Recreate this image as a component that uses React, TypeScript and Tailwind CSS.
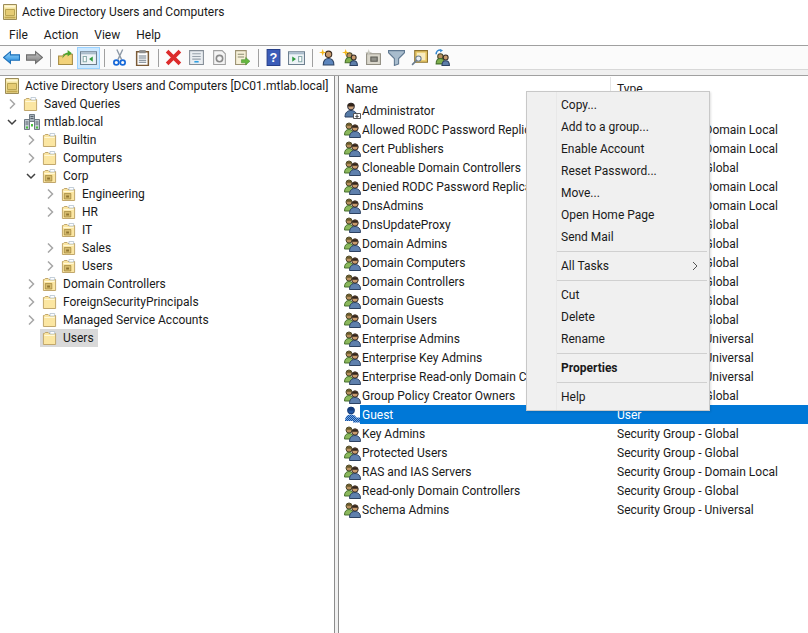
const font = "font-['Roboto','Open_Sans',sans-serif]"

const users: [string, string][] = [
  ['Administrator', 'User'],
  ['Allowed RODC Password Replication Group', 'Security Group - Domain Local'],
  ['Cert Publishers', 'Security Group - Domain Local'],
  ['Cloneable Domain Controllers', 'Security Group - Global'],
  ['Denied RODC Password Replication Group', 'Security Group - Domain Local'],
  ['DnsAdmins', 'Security Group - Domain Local'],
  ['DnsUpdateProxy', 'Security Group - Global'],
  ['Domain Admins', 'Security Group - Global'],
  ['Domain Computers', 'Security Group - Global'],
  ['Domain Controllers', 'Security Group - Global'],
  ['Domain Guests', 'Security Group - Global'],
  ['Domain Users', 'Security Group - Global'],
  ['Enterprise Admins', 'Security Group - Universal'],
  ['Enterprise Key Admins', 'Security Group - Universal'],
  ['Enterprise Read-only Domain Controllers', 'Security Group - Universal'],
  ['Group Policy Creator Owners', 'Security Group - Global'],
  ['Guest', 'User'],
  ['Key Admins', 'Security Group - Global'],
  ['Protected Users', 'Security Group - Global'],
  ['RAS and IAS Servers', 'Security Group - Domain Local'],
  ['Read-only Domain Controllers', 'Security Group - Global'],
  ['Schema Admins', 'Security Group - Universal'],
]

function FolderIcon({ ou }: { ou?: boolean }) {
  return (
    <svg width="15" height="16" viewBox="0 0 16 16" className="shrink-0" preserveAspectRatio="none">
      <path d="M1.500 3.500h1l1-1h3l1 1h7v11h-13z" fill="#fbe6a2" stroke="#bfa468" />
      <path d="M2.500 5.500h11" stroke="#fff8dc" />
      <path d="M8.500 1.500h5v2.500h-5z" fill="#ffffff" stroke="#a8b8c6" strokeWidth="0.7" />
      {ou && <path d="M3.500 7.500h7v5.500h-7z" fill="#d6bb6c" stroke="#9a7f38" strokeWidth="0.7" />}
      {ou && <path d="M5.500 9.500h3v2h-3z" fill="#8f7430" />}
    </svg>
  )
}

function DomainIcon() {
  return (
    <svg width="16" height="16" viewBox="0 0 16 16" className="shrink-0">
      <path d="M5.500 .500h5v7h-5z" fill="#a9b4bd" stroke="#6f7a84" />
      <path d="M.500 5.500h5v10h-5zM10.500 5.500h5v10h-5z" fill="#c3ccd3" stroke="#6f7a84" />
      <path d="M6.500 2.500h3M6.500 4.500h3M1.500 8h3M11.500 8h3M1.500 10h3M11.500 10h3" stroke="#59636c" />
      <path d="M2 12.500h2v2H2zM12 12.500h2v2h-2zM7 10h2v2.500H7z" fill="#49c13d" />
    </svg>
  )
}

function UserIcon({ guest }: { guest?: boolean }) {
  if (guest) {
    return (
      <svg width="17" height="17" viewBox="0 0 17 17" className="shrink-0">
        <defs>
          <pattern id="dither" width="2" height="2" patternUnits="userSpaceOnUse">
            <rect width="2" height="2" fill="#174f9e" />
            <rect width="1" height="1" fill="#6fa6e6" />
            <rect x="1" y="1" width="1" height="1" fill="#6fa6e6" />
          </pattern>
        </defs>
        <circle cx="7" cy="4.500" r="3.400" fill="#1f57a8" stroke="#16386e" />
        <path d="M3.500 3c1-2.500 6-2.500 7 0l-.5 1.500h-6z" fill="#143a78" />
        <path d="M1 15c0-4.500 2.500-6.500 6-6.500s6 2 6 6.500z" fill="url(#dither)" />
        <path d="M9 11.500h7.500v5H9z" fill="url(#dither)" />
      </svg>
    )
  }
  return (
    <svg width="17" height="17" viewBox="0 0 17 17" className="shrink-0">
      <circle cx="7" cy="4.500" r="3.400" fill="#caa07a" stroke="#2a3140" />
      <path d="M3.500 3c1-2.500 6-2.500 7 0l-.5 1.500h-6z" fill="#32241a" />
      <path d="M1 15c0-4.500 2.500-6.500 6-6.500s6 2 6 6.500z" fill="#557aa6" stroke="#2a3f60" />
      <path d="M9.500 11.500h7v5h-7z" fill="#fff" stroke="#555" />
      <path d="M13 12.500v2.500M11.500 14l1.500 1.500 1.500-1.500" stroke="#222" fill="none" />
    </svg>
  )
}

function GroupIcon() {
  return (
    <svg width="17" height="16" viewBox="0 0 17 16" className="shrink-0">
      <circle cx="5" cy="4" r="3" fill="#b78f5e" stroke="#4b4a2c" />
      <path d="M2.500 2.800c1-1.700 4-1.700 5 0l-.5 1h-4z" fill="#6a5a2a" />
      <path d="M.500 13c0-3.500 1.500-5.500 4.500-5.500s4.500 2 4.500 5.500z" fill="#8bb85c" stroke="#47702c" />
      <circle cx="11" cy="6" r="3.200" fill="#c89a6c" stroke="#352b24" />
      <path d="M8 4.800c1-2.200 5-2.200 6 0l-.5 1h-5z" fill="#33261d" />
      <path d="M5.500 15.500c0-4 2-6 5.500-6s5.500 2 5.500 6z" fill="#5f80ad" stroke="#2d4262" />
    </svg>
  )
}

function RootIcon() {
  return (
    <svg width="14" height="16" viewBox="0 0 14 16" className="shrink-0">
      <path d="M.500 .500h13v15h-13z" fill="#f3e3a0" stroke="#9c8c58" />
      <path d="M1.500 1.500h11v2h-11z" fill="#fff8d6" />
      <path d="M2.500 5.500h9v6h-9z" fill="#e6cc74" stroke="#b9a452" />
      <path d="M1.500 13.500h11" stroke="#c2a850" strokeWidth="2" />
    </svg>
  )
}

function Chevron({ open }: { open?: boolean }) {
  return open ? (
    <svg width="10" height="10" viewBox="0 0 10 10" className="shrink-0">
      <path d="M1 3l4 4 4-4" fill="none" stroke="#404040" strokeWidth="1.500" />
    </svg>
  ) : (
    <svg width="10" height="10" viewBox="0 0 10 10" className="shrink-0">
      <path d="M3 .500l4.500 4.500-4.500 4.500" fill="none" stroke="#a6a6a6" strokeWidth="1.500" />
    </svg>
  )
}

function TreeRow({
  depth,
  arrow,
  ou,
  selected,
  children,
}: {
  depth: string
  arrow?: 'open' | 'closed'
  ou?: boolean
  selected?: boolean
  children: string
}) {
  return (
    <div className={`flex h-[18px] items-center ${depth}`}>
      <span className="flex w-[14px] shrink-0 justify-start">
        {arrow && <Chevron open={arrow === 'open'} />}
      </span>
      <span className={`flex h-[18px] items-center ${selected ? 'bg-[#d9d9d9]' : ''}`}>
        <span className="ml-[2px]"><FolderIcon ou={ou} /></span>
        <span className="ml-[6px] pr-[4px] leading-[18px]">{children}</span>
      </span>
    </div>
  )
}

function ToolSep() {
  return <span className="ml-[4px] mr-[3px] h-[18px] w-px shrink-0 bg-[#a0a0a0]" />
}

function ToolBtn({ active, children }: { active?: boolean; children: React.ReactNode }) {
  return (
    <span className={`flex h-[22px] w-[23px] shrink-0 items-center justify-center ${active ? 'border border-[#99d1ff] bg-[#cce8ff]' : ''}`}>
      {children}
    </span>
  )
}

function Tb({ children }: { children: React.ReactNode }) {
  return <svg width="17" height="17" viewBox="0 0 16 16">{children}</svg>
}

function Toolbar() {
  return (
    <div className="flex h-[23px] items-center">
      <ToolBtn>
        <Tb>
          <defs>
            <linearGradient id="backFill" x1="0" y1="0" x2="0" y2="1">
              <stop offset="0" stopColor="#9ad8fb" />
              <stop offset="1" stopColor="#1e86dc" />
            </linearGradient>
            <linearGradient id="fwdFill" x1="0" y1="0" x2="0" y2="1">
              <stop offset="0" stopColor="#c8c8c8" />
              <stop offset="1" stopColor="#7c7c7c" />
            </linearGradient>
          </defs>
          <path d="M.500 8l6.500-5.500V5.500h8.500v5H7v3z" fill="url(#backFill)" stroke="#1c6fb8" />
        </Tb>
      </ToolBtn>
      <ToolBtn><Tb><path d="M15.500 8L9 2.500V5.500H.500v5H9v3z" fill="url(#fwdFill)" stroke="#6e6e6e" /></Tb></ToolBtn>
      <ToolSep />
      <ToolBtn>
        <Tb>
          <path d="M1.500 6.500h4l1-1.500h8v9.500h-13z" fill="#f2d27a" stroke="#a68c45" />
          <path d="M5 9c1-4 3-5.500 5-5.500V1l4 3-4 3V5c-2 0-3 1.500-5 4z" fill="#4aa52e" />
        </Tb>
      </ToolBtn>
      <ToolBtn active>
        <Tb>
          <path d="M.500 2.500h15v12H.500z" fill="#eef3f7" stroke="#6d7f8f" />
          <path d="M1 3h14v2H1z" fill="#a9bccb" />
          <path d="M3 7h3v5H3z" fill="#fff" stroke="#8aa" />
          <path d="M12 7v5L8.500 9.500z" fill="#2f9a3c" />
        </Tb>
      </ToolBtn>
      <ToolSep />
      <ToolBtn>
        <Tb>
          <path d="M11 .500L6.500 10M5.500 .500L10 10" stroke="#8d99a6" strokeWidth="1.300" />
          <circle cx="5" cy="12.700" r="2.300" fill="none" stroke="#1668d8" strokeWidth="1.600" />
          <circle cx="11" cy="12.700" r="2.300" fill="none" stroke="#1668d8" strokeWidth="1.600" />
        </Tb>
      </ToolBtn>
      <ToolBtn>
        <Tb>
          <path d="M2.500 2.500h11v13h-11z" fill="#fff" stroke="#7a5a36" strokeWidth="1.400" />
          <path d="M5 1h6v3H5z" fill="#8d8d8d" />
          <path d="M4.500 6.500h7M4.500 8.500h7M4.500 10.500h7M4.500 12.500h7" stroke="#6d7b88" />
        </Tb>
      </ToolBtn>
      <ToolSep />
      <ToolBtn><Tb><path d="M2 2l12 12M14 2L2 14" stroke="#dc2b2b" strokeWidth="3.500" /></Tb></ToolBtn>
      <ToolBtn>
        <Tb>
          <path d="M1.500 1.500h13v13h-13z" fill="#e9edf1" stroke="#848d96" />
          <path d="M4 4.500h8M4 7h8M4 9.500h8" stroke="#98a2ac" />
          <path d="M6 12h4" stroke="#2f9fe0" strokeWidth="1.500" />
        </Tb>
      </ToolBtn>
      <ToolBtn>
        <Tb>
          <path d="M2.500 1.500h8l3 3v10h-11z" fill="#f4f4f4" stroke="#a0a0a0" />
          <circle cx="8" cy="9" r="3" fill="none" stroke="#8a8a8a" strokeWidth="1.500" />
        </Tb>
      </ToolBtn>
      <ToolBtn>
        <Tb>
          <path d="M1.500 1.500h10v13h-10z" fill="#f6f0d8" stroke="#9a9070" />
          <path d="M3.500 5h6M3.500 7.500h6" stroke="#8a8a70" />
          <path d="M7 10h4V8l4 3.500-4 3.500v-2H7z" fill="#66b840" stroke="#3f8a28" strokeWidth="0.500" />
        </Tb>
      </ToolBtn>
      <ToolSep />
      <ToolBtn>
        <Tb>
          <path d="M2 .500h12v15H2z" fill="#3b5cb8" stroke="#263f8a" />
          <text x="8" y="12.500" textAnchor="middle" fontSize="12" fontWeight="700" fill="#fff" fontFamily="Liberation Sans">?</text>
        </Tb>
      </ToolBtn>
      <ToolBtn>
        <Tb>
          <path d="M.500 2.500h15v12H.500z" fill="#eef3f7" stroke="#6d7f8f" />
          <path d="M1 3h14v2H1z" fill="#a9bccb" />
          <path d="M4 7v5l3.500-2.500z" fill="#2f9a3c" />
          <path d="M10 7h3v5h-3z" fill="#fff" stroke="#8aa" />
        </Tb>
      </ToolBtn>
      <ToolSep />
      <ToolBtn>
        <Tb>
          <circle cx="9" cy="5" r="3" fill="#c89a6c" stroke="#3a2b20" />
          <path d="M4 15c0-4 2-6 5-6s5 2 5 6z" fill="#5d86bd" stroke="#2d4262" />
          <path d="M3.500 0l.8 2.500L7 3.300l-2.700.8L3.500 6.500l-.8-2.400L0 3.300l2.700-.8z" fill="#f4b619" />
        </Tb>
      </ToolBtn>
      <ToolBtn>
        <Tb>
          <circle cx="7" cy="6" r="2.500" fill="#b78f5e" stroke="#4b4a2c" />
          <path d="M3 13c0-3 1.500-5 4-5s4 2 4 5z" fill="#7fb04e" stroke="#47702c" />
          <circle cx="11" cy="8" r="2.300" fill="#c89a6c" stroke="#352b24" />
          <path d="M7.500 15.500c0-3 1-4.500 3.500-4.500s3.500 1.500 3.500 4.500z" fill="#5d7ea9" stroke="#2d4262" />
          <path d="M3.500 0l.8 2.500L7 3.300l-2.700.8L3.500 6.500l-.8-2.400L0 3.300l2.700-.8z" fill="#f4b619" />
        </Tb>
      </ToolBtn>
      <ToolBtn>
        <Tb>
          <path d="M1.500 4.500h13v10h-13z" fill="#d9d6cb" stroke="#8f8c80" />
          <path d="M5.500 7.500h6v4h-6z" fill="#8f8f88" stroke="#5c5c55" />
          <path d="M3.500 0l.8 2.500L7 3.300l-2.700.8L3.500 6.500l-.8-2.400L0 3.300l2.700-.8z" fill="#c9c9c0" />
        </Tb>
      </ToolBtn>
      <ToolBtn><Tb><path d="M.500 1.500h15v2L10 9v5l-4 1.500V9L.500 3.500z" fill="#a8bccd" stroke="#5f7891" /></Tb></ToolBtn>
      <ToolBtn>
        <Tb>
          <path d="M3.500 1.500h12v11h-12z" fill="#e8c866" stroke="#8f7430" />
          <path d="M5.500 3.500h8v7h-8z" fill="#f8ecc0" />
          <circle cx="7" cy="9" r="2.500" fill="#e7eef5" stroke="#6a7c8d" />
          <path d="M5 11l-4 4" stroke="#6a7c8d" strokeWidth="1.500" />
        </Tb>
      </ToolBtn>
      <ToolBtn>
        <Tb>
          <path d="M2 5c0-2.500 2-4 4-4" fill="none" stroke="#2f86d0" strokeWidth="1.500" />
          <path d="M5.500 0l3 1.200-2.500 2z" fill="#2f86d0" />
          <circle cx="6" cy="7" r="2.500" fill="#b78f5e" stroke="#4b4a2c" />
          <path d="M2 14c0-3 1.500-5 4-5s4 2 4 5z" fill="#7fb04e" stroke="#47702c" />
          <circle cx="11" cy="8" r="2.300" fill="#c89a6c" stroke="#352b24" />
          <path d="M7.500 15.500c0-3 1-4.500 3.500-4.500s3.500 1.500 3.500 4.500z" fill="#5d7ea9" stroke="#2d4262" />
        </Tb>
      </ToolBtn>
    </div>
  )
}

function MenuItem({ label, bold, sub }: { label: string; bold?: boolean; sub?: boolean }) {
  return (
    <div className={`flex h-[22px] items-center justify-between pl-[34px] pr-[11px] ${bold ? 'font-bold' : ''}`}>
      <span>{label}</span>
      {sub && (
        <svg width="6" height="10" viewBox="0 0 6 10">
          <path d="M1 1l4 4-4 4" fill="none" stroke="#555" />
        </svg>
      )}
    </div>
  )
}

function MenuSep() {
  return <div className="my-[3px] ml-[30px] mr-[2px] h-px bg-[#d0d0d0]" />
}

function ContextMenu() {
  return (
    <div className="absolute left-[526px] top-[91px] w-[184px] border border-[#c8c8c8] bg-[linear-gradient(90deg,#f0f0f0_29px,#e8e8e8_29px,#e8e8e8_30px,#f0f0f0_30px)] py-[2px] text-[#1a1a1a] shadow-[1px_1px_2px_rgba(0,0,0,0.12)]">
      <MenuItem label="Copy..." />
      <MenuItem label="Add to a group..." />
      <MenuItem label="Enable Account" />
      <MenuItem label="Reset Password..." />
      <MenuItem label="Move..." />
      <MenuItem label="Open Home Page" />
      <MenuItem label="Send Mail" />
      <MenuSep />
      <MenuItem label="All Tasks" sub />
      <MenuSep />
      <MenuItem label="Cut" />
      <MenuItem label="Delete" />
      <MenuItem label="Rename" />
      <MenuSep />
      <MenuItem label="Properties" bold />
      <MenuSep />
      <MenuItem label="Help" />
    </div>
  )
}

export default function App() {
  return (
    <div className={`relative flex h-[633px] w-[808px] flex-col overflow-hidden bg-white text-[12px] text-[#1a1a1a] ${font}`}>
      <div className="flex h-[24px] items-center pl-[3px]">
        <RootIcon />
        <span className="ml-[5px]">Active Directory Users and Computers</span>
      </div>
      <div className="flex h-[21px] items-center gap-[16px] pl-[9px]">
        <span>File</span>
        <span>Action</span>
        <span>View</span>
        <span>Help</span>
      </div>
      <div className="border-t border-[#a0a0a0] bg-[#fbfbfb]">
        <Toolbar />
      </div>
      <div className="h-[6px] border-t border-[#d8d8d8] bg-[#f0f0f0]" />
      <div className="flex flex-1 border-t border-[#a0a0a0]">
        <div className="w-[335px] shrink-0 overflow-hidden border-r border-[#8c8c8c] pt-[1px]">
          <div className="flex h-[18px] items-center pl-[5px]">
            <RootIcon />
            <span className="ml-[6px] whitespace-nowrap">Active Directory Users and Computers [DC01.mtlab.local]</span>
          </div>
          <TreeRow depth="pl-[7px]" arrow="closed">Saved Queries</TreeRow>
          <div className="flex h-[18px] items-center pl-[7px]">
            <span className="w-[14px] shrink-0"><Chevron open /></span>
            <span className="ml-[3px]"><DomainIcon /></span>
            <span className="ml-[4px]">mtlab.local</span>
          </div>
          <TreeRow depth="pl-[26px]" arrow="closed">Builtin</TreeRow>
          <TreeRow depth="pl-[26px]" arrow="closed">Computers</TreeRow>
          <TreeRow depth="pl-[26px]" arrow="open" ou>Corp</TreeRow>
          <TreeRow depth="pl-[45px]" arrow="closed" ou>Engineering</TreeRow>
          <TreeRow depth="pl-[45px]" arrow="closed" ou>HR</TreeRow>
          <TreeRow depth="pl-[45px]" ou>IT</TreeRow>
          <TreeRow depth="pl-[45px]" arrow="closed" ou>Sales</TreeRow>
          <TreeRow depth="pl-[45px]" arrow="closed" ou>Users</TreeRow>
          <TreeRow depth="pl-[26px]" arrow="closed" ou>Domain Controllers</TreeRow>
          <TreeRow depth="pl-[26px]" arrow="closed">ForeignSecurityPrincipals</TreeRow>
          <TreeRow depth="pl-[26px]" arrow="closed">Managed Service Accounts</TreeRow>
          <TreeRow depth="pl-[26px]" selected>Users</TreeRow>
        </div>
        <div className="w-[3px] shrink-0 bg-[#f0f0f0]" />
        <div className="min-w-0 flex-1 border-l border-[#8c8c8c]">
          <div className="flex h-[25px] items-center pt-[1px]">
            <span className="w-[272px] border-r border-[#e5e5e5] pl-[7px] leading-[25px]">Name</span>
            <span className="pl-[6px]">Type</span>
          </div>
          {users.map(([name, type]) => {
            const sel = name === 'Guest'
            return (
              <div key={name} className="flex h-[19px] items-center">
                <span className="flex w-[21px] shrink-0 justify-start pl-[5px]">
                  {type === 'User' ? <UserIcon guest={sel} /> : <GroupIcon />}
                </span>
                <div className={`flex h-[19px] flex-1 items-center pl-[2px] ${sel ? 'bg-[#0078d7] text-white' : ''}`}>
                  <span className="w-[255px] overflow-hidden whitespace-nowrap">{name}</span>
                  <span className="whitespace-nowrap">{type}</span>
                </div>
              </div>
            )
          })}
        </div>
      </div>
      <ContextMenu />
    </div>
  )
}
